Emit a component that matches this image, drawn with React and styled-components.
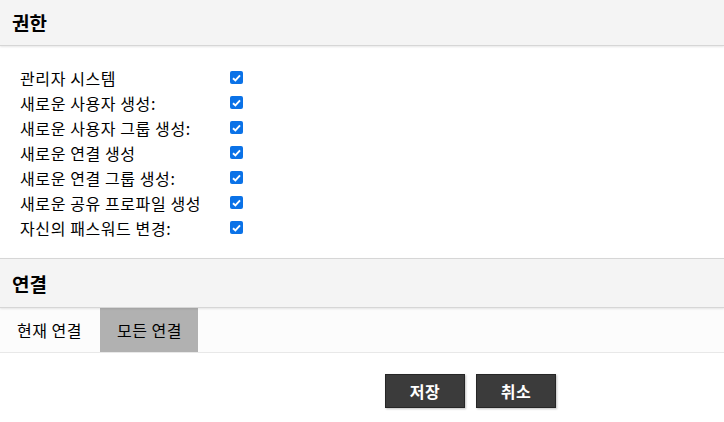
import styled, { createGlobalStyle } from 'styled-components';

const GlobalStyle = createGlobalStyle`
  html, body {
    margin: 0;
    padding: 0;
    background: #fff;
    font-family: "Noto Sans CJK KR", "Noto Sans", sans-serif;
    color: #000;
  }
`;

const Page = styled.div`
  width: 724px;
  height: 422px;
  overflow: hidden;
  display: flex;
  flex-direction: column;
`;

const Header = styled.div`
  height: ${(props) => props.$height}px;
  flex-shrink: 0;
  box-sizing: border-box;
  display: flex;
  align-items: center;
  padding-left: 12px;
  background: #f4f4f4;
  border-bottom: 1px solid #d6d6d6;
  border-top: ${(props) => (props.$top ? '1px solid #d6d6d6' : 'none')};
  box-shadow: 0 1px 2px rgba(0, 0, 0, 0.1);
  position: relative;
  z-index: 1;
`;

const Title = styled.h2`
  margin: 0;
  font-size: 19px;
  font-weight: 700;
  line-height: 1;
`;

const PermissionList = styled.div`
  padding: 19px 0 18px 20px;
  display: flex;
  flex-direction: column;
`;

const PermissionRow = styled.label`
  display: grid;
  grid-template-columns: 210px 13px;
  align-items: center;
  height: 25px;
  font-size: 16px;
  letter-spacing: 0.6px;
`;

const Check = styled.span`
  width: 13px;
  height: 13px;
  border-radius: 2px;
  background: #0b72e7;
  display: flex;
  align-items: center;
  justify-content: center;
`;

const Tabs = styled.div`
  display: flex;
  flex-shrink: 0;
  height: 45px;
  box-sizing: border-box;
  background: #fcfcfc;
  border-bottom: 1px solid #e8e8e8;
`;

const Tab = styled.div`
  display: flex;
  align-items: center;
  padding-left: 17px;
  width: ${(props) => props.$width}px;
  box-sizing: border-box;
  font-size: 16px;
  letter-spacing: 0.5px;
  background: ${(props) => (props.$active ? '#b1b1b1' : 'transparent')};
`;

const Actions = styled.div`
  display: flex;
  gap: 11px;
  padding: 21px 0 0 385px;
`;

const Button = styled.button`
  width: 80px;
  height: 34px;
  box-sizing: border-box;
  background: #3b3b3b;
  border: 1px solid #262626;
  color: #fff;
  font-family: "Noto Sans CJK KR", "Noto Sans", sans-serif;
  font-size: 16px;
  letter-spacing: 0.5px;
  font-weight: 700;
  box-shadow: 1px 1px 2px rgba(0, 0, 0, 0.25);
  padding: 0;
  cursor: pointer;
`;

const permissions = [
  '관리자 시스템',
  '새로운 사용자 생성:',
  '새로운 사용자 그룹 생성:',
  '새로운 연결 생성',
  '새로운 연결 그룹 생성:',
  '새로운 공유 프로파일 생성',
  '자신의 패스워드 변경:',
];

function CheckMark() {
  return (
    <Check>
      <svg width="9" height="8" viewBox="0 0 9 8">
        <path d="M1 4.2 L3.4 6.4 L8 1.4" fill="none" stroke="#fff" strokeWidth="1.9" />
      </svg>
    </Check>
  );
}

export default function App() {
  return (
    <Page>
      <GlobalStyle />
      <Header $height={46}>
        <Title>권한</Title>
      </Header>
      <PermissionList>
        {permissions.map((label) => (
          <PermissionRow key={label}>
            <span>{label}</span>
            <CheckMark />
          </PermissionRow>
        ))}
      </PermissionList>
      <Header $height={50} $top>
        <Title>연결</Title>
      </Header>
      <Tabs>
        <Tab $width={100}>현재 연결</Tab>
        <Tab $width={98} $active>
          모든 연결
        </Tab>
      </Tabs>
      <Actions>
        <Button>저장</Button>
        <Button>취소</Button>
      </Actions>
    </Page>
  );
}
